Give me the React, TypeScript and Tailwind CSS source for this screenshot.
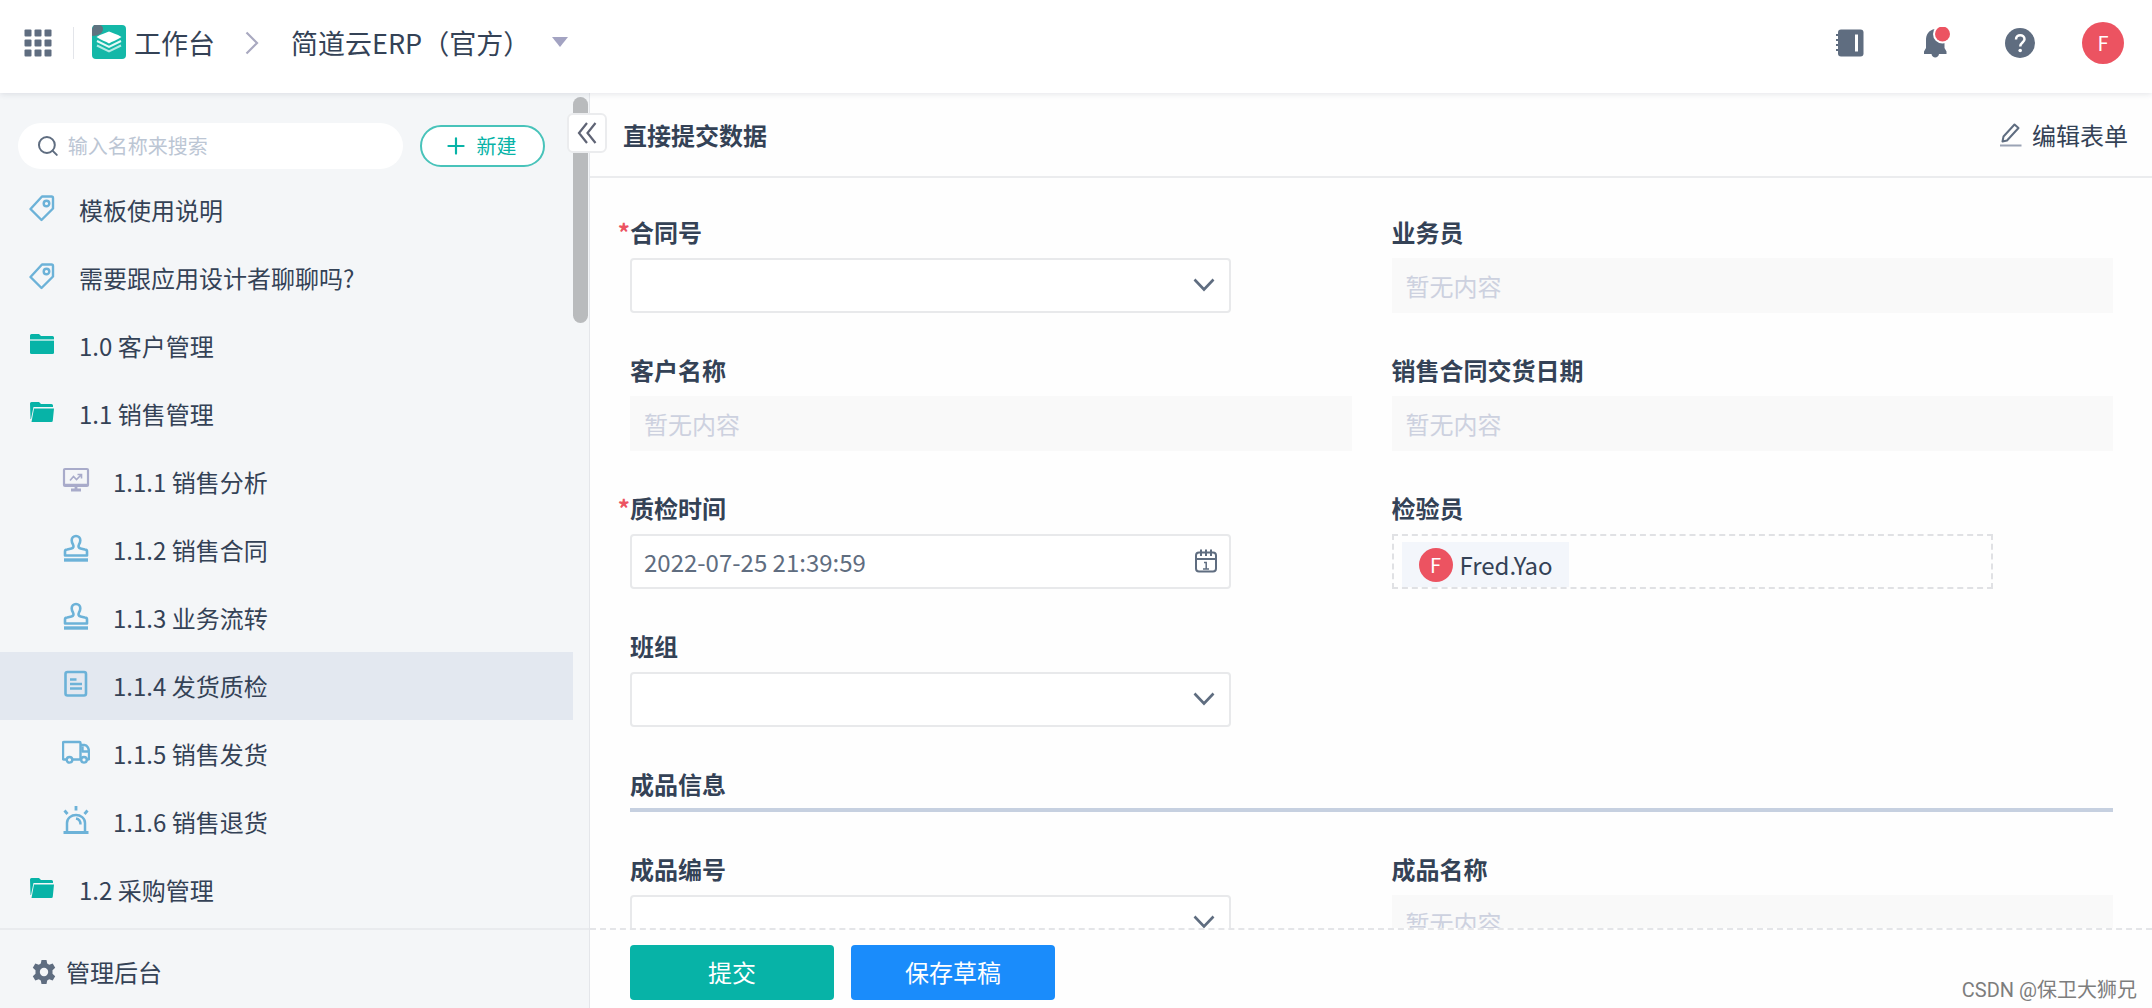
import { useState } from 'react'
import type { ReactNode } from 'react'
import { Plus, Search } from 'lucide-react'

interface MenuItem {
  id: string
  label: string
  icon: ReactNode
  child?: boolean
}

function TagIcon() {
  return (
    <svg viewBox="0 0 26 28" className="h-7 w-[26px]" fill="none" stroke="#6cb2d8" strokeWidth="2.4" strokeLinejoin="round">
      <path d="M13 2.5 H22.500 Q24 2.500 24 4 V14.500 L12.500 26 L1.500 15 Z" />
      <circle cx="17.5" cy="9.500" r="2.800" />
    </svg>
  )
}

function FolderIcon() {
  return (
    <svg viewBox="0 0 24 20" className="h-5 w-6" fill="#07b3a7">
      <path d="M1.5 0 H9 L11 2 H22.5 A1.5 1.5 0 0 1 24 3.5 V5 H0 V1.5 A1.5 1.5 0 0 1 1.5 0 Z" />
      <path d="M0 7 H24 V18.5 A1.5 1.5 0 0 1 22.5 20 H1.5 A1.5 1.5 0 0 1 0 18.5 Z" />
      <path d="M0 5 H24 V7 H0 Z" fill="#9adfda" />
    </svg>
  )
}

function FolderOpenIcon() {
  return (
    <svg viewBox="0 0 24 20" className="h-5 w-6" fill="#07b3a7">
      <path d="M1.5 0 H9 L11 2 H21.5 A1.5 1.5 0 0 1 23 3.5 V5 H3.5 L1 17 H0.5 L0 1.5 A1.5 1.5 0 0 1 1.5 0 Z" />
      <path d="M4 6.5 H24 L22.8 18.5 A1.5 1.5 0 0 1 21.3 20 H1.5 Z" />
    </svg>
  )
}

function ScreenIcon() {
  return (
    <svg viewBox="0 0 28 28" className="size-7" fill="none" stroke="#a8abca" strokeWidth="2.2">
      <rect x="2" y="3" width="24" height="17" rx="1" />
      <path d="M2 18.500 H26" strokeWidth="1.500" />
      <path d="M8 14.500 L11.500 10.500 L14.500 13.500 L19 9 M15.500 8.500 H19.500 V12.500" strokeWidth="1.600" />
      <path d="M14 20 V24 M9 24 H19" strokeWidth="2.800" />
    </svg>
  )
}

function StampIcon() {
  return (
    <svg viewBox="0 0 28 28" className="size-7" fill="none" stroke="#6cb2d8" strokeWidth="2.600" strokeLinejoin="round">
      <path d="M3 21.500 V17.500 C3 16.200 4 15.500 5.200 15.500 L9.500 14.500 C11.500 14 12 12.500 11 10.500 C10 9 9.700 8 9.700 6.300 A4.300 4.300 0 0 1 18.300 6.300 C18.300 8 18 9 17 10.500 C16 12.500 16.500 14 18.500 14.500 L22.800 15.500 C24 15.500 25 16.200 25 17.500 V21.500 Z" />
      <path d="M2 26 H26" strokeWidth="3.400" />
    </svg>
  )
}

function SheetIcon() {
  return (
    <svg viewBox="0 0 28 28" className="size-7" fill="none" stroke="#6cb2d8" strokeWidth="2.600">
      <rect x="3.500" y="2" width="20.500" height="23.500" rx="2" />
      <path d="M8 9.500 H14.500 M8 14 H20 M8 18.500 H20" strokeWidth="2.400" />
    </svg>
  )
}

function TruckIcon() {
  return (
    <svg viewBox="0 0 28 28" className="size-7" fill="none" stroke="#6cb2d8" strokeWidth="2.400" strokeLinejoin="round">
      <path d="M4.500 21.500 H2 A1 1 0 0 1 1 20.500 V5 A1 1 0 0 1 2 4 H17.500 A1 1 0 0 1 18.500 5 V21.500 H10.500" />
      <path d="M18.500 7 H22.500 C25.500 7 27 11 27 14 V20.500 A1 1 0 0 1 26 21.500 H25 M20.500 8.500 V13.500 H27" />
      <circle cx="7.500" cy="21.800" r="2.800" />
      <circle cx="22" cy="21.800" r="2.800" />
    </svg>
  )
}

function AlarmIcon() {
  return (
    <svg viewBox="0 0 28 28" className="size-7" fill="none" stroke="#6cb2d8" strokeWidth="2.500">
      <path d="M1.500 26.500 H26.500" strokeWidth="3" />
      <path d="M5 26 V17 C5 12 9.500 9 14 9 S23 12 23 17 V26" />
      <path d="M14 12.500 C17 13 18.500 15.500 18.500 18.500" strokeWidth="2.400" />
      <path d="M14 0 V4.500 M2.500 4.500 L5.500 8 M25.500 4.500 L22.500 8" strokeWidth="2.800" />
    </svg>
  )
}

function LogoIcon() {
  return (
    <svg viewBox="0 0 34 34" className="size-[34px]">
      <rect x="0" y="0" width="34" height="34" rx="4" fill="#14b8a8" />
      <path d="M2 0 H8 A4 4 0 0 1 11 4 C11 8 7 11 0 11 V4 Z" fill="#5f7380" />
      <path d="M17 6.500 C20 8 25 9 29.500 12 C25 15 20 16.500 17 18.500 C14 16.500 9 15 4.500 12 C9 9 14 8 17 6.500 Z" fill="#fff" />
      <path d="M5 16 L17 22 L29 16" fill="none" stroke="#e6f9f7" strokeWidth="2" />
      <path d="M5 20.500 L17 26.500 L29 20.500" fill="none" stroke="#b4ebe5" strokeWidth="2" />
    </svg>
  )
}

function AppsIcon() {
  return (
    <svg viewBox="0 0 28 28" className="size-7" fill="#5f6d80">
      {[0, 10, 20].map(y =>
        [0, 10, 20].map(x => <rect key={`${x}-${y}`} x={x + 0.5} y={y + 0.5} width="7" height="7" rx="1" />)
      )}
    </svg>
  )
}

function NotebookIcon() {
  return (
    <svg viewBox="0 0 28 28" className="size-7">
      <rect x="2" y="0.5" width="25.500" height="27" rx="3" fill="#5f6d80" />
      <path d="M0 6 H4 M0 11 H4 M0 16 H4 M0 21 H4" stroke="#5f6d80" strokeWidth="2" />
      <path d="M20.500 5.500 V22.500" stroke="#fff" strokeWidth="3" />
    </svg>
  )
}

function BellIcon() {
  return (
    <svg viewBox="0 0 28 32" className="h-8 w-7">
      <path d="M12 2 C5.5 3 3 8 3 13 V21 L1 24.5 V27 H8.5 C9 31.5 15.5 31.5 16 27 H23.5 V24.5 L21.5 21 V13 C21.5 7 18 3 12 2 Z" fill="#5f6d80" />
      <circle cx="19.5" cy="7" r="9.5" fill="#fff" />
      <circle cx="19.5" cy="7" r="7.5" fill="#ec5361" />
    </svg>
  )
}

function HelpIcon() {
  return (
    <svg viewBox="0 0 30 30" className="size-[30px]">
      <circle cx="15" cy="15" r="15" fill="#5f6d80" />
      <path d="M11 11.5 C11 5.5 19.5 6 19.5 11.2 C19.5 14.5 15.2 14.5 15.2 18.5" fill="none" stroke="#fff" strokeWidth="2.5" />
      <circle cx="15.2" cy="22.5" r="1.8" fill="#fff" />
    </svg>
  )
}

function EditIcon() {
  return (
    <svg viewBox="0 0 22 24" className="h-6 w-[22px]" fill="none" stroke="#5f6d80" strokeWidth="2" strokeLinejoin="round">
      <path d="M2.5 18.5 L3.500 13.500 L14.500 1.500 L18.500 5 L7 17.500 Z" />
      <path d="M0 22.5 H21.5" stroke="#9aa3b5" />
    </svg>
  )
}

function CalendarIcon() {
  return (
    <svg viewBox="0 0 22 24" className="h-6 w-[22px]" fill="none" stroke="#5f6d80" strokeWidth="2">
      <rect x="1" y="3.5" width="20" height="19" rx="3" />
      <path d="M1 10 H21 M6 0.5 V7 M11 0.5 V7 M16 0.5 V7" />
      <path d="M9 13.5 H11.2 V20 M8 20 H14" strokeWidth="1.5" />
    </svg>
  )
}

function GearIcon() {
  return (
    <svg viewBox="0 0 24 26" className="h-[26px] w-6">
      <path
        d="M9.5 1 H14.5 L15.2 4.6 L17.2 5.7 L20.7 4.5 L23.2 8.8 L20.5 11.2 V14.8 L23.2 17.2 L20.7 21.5 L17.2 20.3 L15.2 21.4 L14.5 25 H9.5 L8.8 21.4 L6.8 20.3 L3.3 21.5 L0.8 17.2 L3.5 14.8 V11.2 L0.8 8.8 L3.3 4.5 L6.8 5.7 L8.8 4.6 Z"
        fill="#5f6d80"
      />
      <circle cx="12" cy="13" r="4.2" fill="#f4f6f8" />
    </svg>
  )
}

const menu: MenuItem[] = [
  { id: 'guide', label: '模板使用说明', icon: <TagIcon /> },
  { id: 'chat', label: '需要跟应用设计者聊聊吗?', icon: <TagIcon /> },
  { id: '1.0', label: '1.0 客户管理', icon: <FolderIcon /> },
  { id: '1.1', label: '1.1 销售管理', icon: <FolderOpenIcon /> },
  { id: '1.1.1', label: '1.1.1 销售分析', icon: <ScreenIcon />, child: true },
  { id: '1.1.2', label: '1.1.2 销售合同', icon: <StampIcon />, child: true },
  { id: '1.1.3', label: '1.1.3 业务流转', icon: <StampIcon />, child: true },
  { id: '1.1.4', label: '1.1.4 发货质检', icon: <SheetIcon />, child: true },
  { id: '1.1.5', label: '1.1.5 销售发货', icon: <TruckIcon />, child: true },
  { id: '1.1.6', label: '1.1.6 销售退货', icon: <AlarmIcon />, child: true },
  { id: '1.2', label: '1.2 采购管理', icon: <FolderOpenIcon /> },
]

function Header() {
  return (
    <header className="relative z-10 flex h-[93px] shrink-0 items-center bg-white pr-7 pb-2 pl-6 text-[27px] shadow-[0_1px_6px_rgba(30,40,70,0.12)]">
      <button type="button" aria-label="应用列表">
        <AppsIcon />
      </button>
      <span className="ml-[21px] h-8 w-px bg-[#e3e5ea]" />
      <a href="#workbench" className="ml-[18px] flex items-center gap-2">
        <LogoIcon />
        工作台
      </a>
      <svg viewBox="0 0 14 24" className="ml-[30px] h-6 w-3.5" fill="none" stroke="#a9a9c0" strokeWidth="2.2">
        <path d="M1.5 1.5 L12 12 L1.5 22.5" />
      </svg>
      <button type="button" className="ml-8 flex items-center gap-[22px]">
        简道云ERP（官方）
        <svg viewBox="0 0 16 10" className="h-2.5 w-4" fill="#a3a3c2">
          <path d="M0 0 H16 L8 10 Z" />
        </svg>
      </button>
      <div className="ml-auto flex items-center">
        <button type="button" aria-label="通讯录">
          <NotebookIcon />
        </button>
        <button type="button" aria-label="通知" className="ml-[59px]">
          <BellIcon />
        </button>
        <button type="button" aria-label="帮助" className="ml-[54px]">
          <HelpIcon />
        </button>
        <button type="button" className="ml-[47px] flex size-[42px] items-center justify-center rounded-full bg-[#ec5361] text-xl text-white">
          F
        </button>
      </div>
    </header>
  )
}

function Sidebar() {
  const [active, setActive] = useState('1.1.4')
  const [keyword, setKeyword] = useState('')

  return (
    <aside className="relative flex w-[590px] shrink-0 flex-col border-r border-[#e4e6ea] bg-[#f4f6f8]">
      <div className="flex min-h-0 flex-1">
        <div className="flex-1 overflow-hidden pt-[30px]">
          <div className="mb-[7px] flex items-center justify-between pr-7 pl-[18px]">
            <label className="flex h-[46px] w-[385px] items-center gap-2 rounded-full bg-white pl-[18px]">
              <Search className="size-[26px] text-[#5f6d80]" strokeWidth={2} />
              <input
                type="text"
                value={keyword}
                onChange={e => setKeyword(e.target.value)}
                placeholder="输入名称来搜索"
                className="w-full bg-transparent text-xl outline-none placeholder:text-[#bcc6d4]"
              />
            </label>
            <button
              type="button"
              className="flex h-[42px] w-[125px] items-center justify-center gap-2 rounded-full border-2 border-[#48c3ba] bg-white pr-1.5 text-xl text-[#07b3a7]"
            >
              <Plus className="size-[26px]" strokeWidth={2} />
              新建
            </button>
          </div>
          <nav>
            {menu.map(item => (
              <button
                key={item.id}
                type="button"
                onClick={() => setActive(item.id)}
                className={`flex h-[68px] w-full items-center text-left ${item.child ? 'pl-[62px]' : 'pl-7'} ${
                  active === item.id ? 'bg-[#e3e8f0]' : ''
                }`}
              >
                <span className="flex w-7 justify-center pb-1">{item.icon}</span>
                <span className="ml-[23px]">{item.label}</span>
              </button>
            ))}
          </nav>
        </div>
        <div className="w-4 pt-1">
          <div className="h-[226px] w-[15px] rounded-full bg-[#b9bbbd]" />
        </div>
      </div>
      <button type="button" className="flex h-20 shrink-0 items-center gap-2.5 border-t-2 border-[#e9ebee] pt-1.5 pl-8">
        <GearIcon />
        管理后台
      </button>
      <button
        type="button"
        aria-label="收起"
        className="absolute top-5 -right-[18px] z-10 flex h-10 w-10 items-center justify-center rounded-md border-2 border-[#ebecee] bg-white"
      >
        <svg viewBox="0 0 20 22" className="h-[22px] w-5" fill="none" stroke="#5f6475" strokeWidth="2.2">
          <path d="M10 1 L2 11 L10 21 M18.5 1 L10.5 11 L18.5 21" />
        </svg>
      </button>
    </aside>
  )
}

interface FieldProps {
  id: string
  label: string
  required?: boolean
  children: ReactNode
}

function Field({ id, label, required, children }: FieldProps) {
  return (
    <div className="flex flex-col gap-2.5">
      <label htmlFor={id} className="relative leading-8 font-bold">
        {required && <span className="absolute right-full text-[#ec5361]">*</span>}
        {label}
      </label>
      {children}
    </div>
  )
}

function EmptyInput({ id }: { id: string }) {
  return (
    <input
      id={id}
      disabled
      placeholder="暂无内容"
      className="h-[55px] w-full bg-[#f9f9f9] px-3.5 placeholder:text-[#cdd1df]"
    />
  )
}

function SelectInput({ id }: { id: string }) {
  return (
    <div className="relative h-[55px] w-5/6">
      <select id={id} className="h-full w-full appearance-none rounded border-2 border-[#e8e9eb] bg-white px-3.5 outline-none">
        <option value=""></option>
      </select>
      <svg
        viewBox="0 0 22 14"
        className="pointer-events-none absolute top-5 right-4 h-3.5 w-[22px]"
        fill="none"
        stroke="#5f6d80"
        strokeWidth="2.6"
      >
        <path d="M1.5 1.5 L11 11.5 L20.5 1.5" />
      </svg>
    </div>
  )
}

export default function App() {
  const [time, setTime] = useState('2022-07-25 21:39:59')

  return (
    <div className="flex h-screen flex-col overflow-hidden bg-[#fefefe] font-['Noto_Sans_CJK_SC',sans-serif] text-2xl text-[#344256]">
      <Header />
      <div className="flex min-h-0 flex-1">
        <Sidebar />
        <main className="flex min-w-0 flex-1 flex-col">
          <div className="flex h-[85px] shrink-0 items-center justify-between border-b-2 border-[#ebecee] pr-6 pl-[33px]">
            <h1 className="font-bold">直接提交数据</h1>
            <button type="button" className="flex items-center gap-2.5">
              <EditIcon />
              编辑表单
            </button>
          </div>

          <form
            id="quality-form"
            onSubmit={e => e.preventDefault()}
            className="min-h-0 flex-1 overflow-hidden pt-[38px] pr-[39px] pl-10"
          >
            <div className="grid grid-cols-2 gap-x-10 gap-y-[41px]">
              <Field id="contract" label="合同号" required>
                <SelectInput id="contract" />
              </Field>
              <Field id="salesman" label="业务员">
                <EmptyInput id="salesman" />
              </Field>
              <Field id="customer" label="客户名称">
                <EmptyInput id="customer" />
              </Field>
              <Field id="delivery" label="销售合同交货日期">
                <EmptyInput id="delivery" />
              </Field>
              <Field id="time" label="质检时间" required>
                <div className="relative h-[55px] w-5/6">
                  <input
                    id="time"
                    type="text"
                    value={time}
                    onChange={e => setTime(e.target.value)}
                    className="h-full w-full rounded border-2 border-[#e8e9eb] bg-white px-3 text-[#5f6d80] outline-none"
                  />
                  <span className="pointer-events-none absolute top-[15px] right-3.5">
                    <CalendarIcon />
                  </span>
                </div>
              </Field>
              <Field id="inspector" label="检验员">
                <div className="flex h-[55px] w-5/6 items-end border-2 border-dashed border-[#e0e1e4] pl-2">
                  <button
                    id="inspector"
                    type="button"
                    className="flex h-[45px] items-center gap-[7px] bg-[#f3f6fb] pr-4 pl-[17px]"
                  >
                    <span className="flex size-[34px] items-center justify-center rounded-full bg-[#ec5361] text-xl text-white">F</span>
                    Fred.Yao
                  </button>
                </div>
              </Field>
              <Field id="team" label="班组">
                <SelectInput id="team" />
              </Field>
              <h2 className="col-span-2 border-b-4 border-[#c6d0e0] pb-2 leading-8 font-bold">成品信息</h2>
              <Field id="product-no" label="成品编号">
                <SelectInput id="product-no" />
              </Field>
              <Field id="product-name" label="成品名称">
                <EmptyInput id="product-name" />
              </Field>
            </div>
          </form>

          <footer className="relative flex h-20 shrink-0 items-center gap-[17px] border-t-2 border-dashed border-[#e4e5e8] bg-[#fefefe] pt-1.5 pl-10 text-white">
            <button type="submit" form="quality-form" className="h-[55px] w-[204px] rounded bg-[#07b3a7]">
              提交
            </button>
            <button type="button" className="h-[55px] w-[204px] rounded bg-[#1a8cfb]">
              保存草稿
            </button>
            <span className="absolute right-[15px] bottom-1 font-[Roboto,'Noto_Sans_CJK_SC',sans-serif] text-xl text-[#7d7d7d]">
              CSDN @保卫大狮兄
            </span>
          </footer>
        </main>
      </div>
    </div>
  )
}
